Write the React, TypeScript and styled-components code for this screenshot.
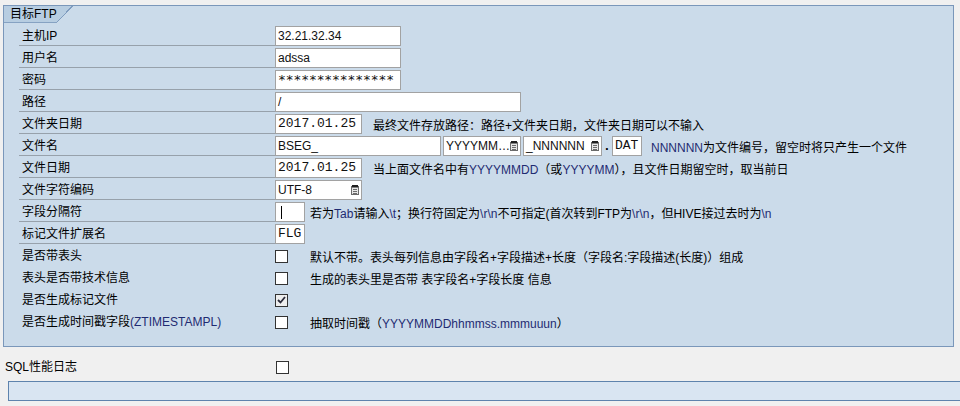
import React from 'react';
import styled, { createGlobalStyle } from 'styled-components';

const GlobalStyle = createGlobalStyle`
  *, *::before, *::after { box-sizing: border-box; }
  html, body {
    margin: 0;
    padding: 0;
    background: #f0f0f0;
  }
  body {
    width: 960px;
    height: 406px;
    overflow: hidden;
    font-family: "Liberation Sans", "Noto Sans CJK SC", sans-serif;
    font-size: 12px;
    color: #000;
  }
`;

const Page = styled.div`
  padding-top: 5px;
  overflow: hidden;
`;

const Group = styled.section`
  margin: 0 6px 0 3px;
  border: 1px solid #7a97ba;
  background: #cbdbea;
  padding-bottom: 14px;
`;

const GroupTitle = styled.div`
  position: relative;
  width: 53px;
  height: 17px;
  padding-left: 6px;
  line-height: 16px;
  white-space: nowrap;
  background: #b7cde1;
  border-bottom: 1px solid #86a2c2;

  &::after {
    content: '';
    position: absolute;
    left: 100%;
    top: 0;
    bottom: -1px;
    width: 16px;
    background: linear-gradient(
      to bottom right,
      #b7cde1 calc(50% - 1px),
      #7f9cbf calc(50% - 1px),
      #7f9cbf 50%,
      transparent 50%
    );
  }
`;

const Form = styled.div`
  display: flex;
  flex-direction: column;
  gap: 2px;
  margin-top: 3px;
  padding-left: 15px;
`;

const Row = styled.div`
  display: flex;
  height: 20px;
`;

const Label = styled.div<{ $ruled?: boolean; $width?: number }>`
  flex: none;
  width: ${p => p.$width ?? 256}px;
  padding-left: 3px;
  padding-bottom: 1px;
  display: flex;
  align-items: flex-end;
  line-height: 16px;
  white-space: nowrap;
  border-bottom: 1px solid ${p => (p.$ruled ? '#97a1ab' : 'transparent')};
`;

const Field = styled.div`
  display: flex;
  align-items: center;
  height: 20px;
  white-space: nowrap;
`;

const TextBox = styled.div<{ $width: number; $mono?: boolean }>`
  flex: none;
  width: ${p => p.$width}px;
  height: 20px;
  padding: 0 2px;
  display: flex;
  align-items: center;
  justify-content: space-between;
  overflow: hidden;
  background: #fff;
  border: 1px solid #a2a2a2;
  font-family: ${p =>
    p.$mono ? '"Liberation Mono", monospace' : '"Liberation Sans", "Noto Sans CJK SC", sans-serif'};
  font-size: ${p => (p.$mono ? 13 : 12)}px;
  line-height: 18px;
  color: #111;
  & + & {
    margin-left: 2px;
  }
`;

const Secret = styled.span`
  font-family: "DejaVu Sans Mono", monospace;
  font-size: 13px;
  letter-spacing: -0.1px;
`;

const Caret = styled.span`
  display: block;
  width: 1px;
  height: 13px;
  margin-left: 3px;
  background: #000;
`;

const Dot = styled.span`
  width: 10px;
  text-align: center;
  font-family: "Liberation Mono", monospace;
  font-size: 13px;
  font-weight: bold;
`;

const Desc = styled.span<{ $gap: number }>`
  margin-left: ${p => p.$gap}px;
  font-family: "Liberation Sans", "Noto Sans CJK SC", sans-serif;
  font-size: 12px;
`;

const Code = styled.span`
  color: #1f2b72;
`;

const Box = styled.span<{ $checked?: boolean }>`
  flex: none;
  width: 13px;
  height: 13px;
  display: inline-flex;
  align-items: center;
  justify-content: center;
  border: 1px solid #333;
  background: ${p => (p.$checked ? '#eeeeee' : '#fff')};
`;

const Outside = styled.div`
  display: flex;
  height: 20px;
  margin-top: 10px;
  padding-left: 2px;
`;

const Bar = styled.div`
  height: 20px;
  margin: 4px -20px 0 8px;
  border: 1px solid #5e83ad;
  background: #d9e5f2;
`;

const PickIcon = () => (
  <svg width="8" height="10" viewBox="0 0 8 10">
    <rect x="0.5" y="1.5" width="7" height="8" fill="#e6e6e6" stroke="#6a6a6a" />
    <rect x="1" y="0" width="6" height="2.5" fill="#1e1e1e" />
    <path d="M2 4.5h4M2 6.5h4M2 8.5h4" stroke="#6a6a6a" strokeWidth="1" />
  </svg>
);

const Check = ({ checked }: { checked?: boolean }) => (
  <Box $checked={checked}>
    {checked && (
      <svg width="9" height="8" viewBox="0 0 9 8">
        <path d="M1 4l2.5 2.5L8 1" fill="none" stroke="#2b2b3a" strokeWidth="1.8" />
      </svg>
    )}
  </Box>
);

export default function App() {
  return (
    <Page>
      <GlobalStyle />
      <Group>
        <GroupTitle>目标FTP</GroupTitle>
        <Form>
          <Row>
            <Label $ruled>主机IP</Label>
            <Field>
              <TextBox $width={126}>32.21.32.34</TextBox>
            </Field>
          </Row>
          <Row>
            <Label $ruled>用户名</Label>
            <Field>
              <TextBox $width={126}>adssa</TextBox>
            </Field>
          </Row>
          <Row>
            <Label $ruled>密码</Label>
            <Field>
              <TextBox $width={126}>
                <Secret>***************</Secret>
              </TextBox>
            </Field>
          </Row>
          <Row>
            <Label $ruled>路径</Label>
            <Field>
              <TextBox $width={246}>/</TextBox>
            </Field>
          </Row>
          <Row>
            <Label $ruled>文件夹日期</Label>
            <Field>
              <TextBox $width={87} $mono>2017.01.25</TextBox>
              <Desc $gap={11}>最终文件存放路径：路径+文件夹日期，文件夹日期可以不输入</Desc>
            </Field>
          </Row>
          <Row>
            <Label $ruled>文件名</Label>
            <Field>
              <TextBox $width={166}>BSEG_</TextBox>
              <TextBox $width={78}>
                YYYYMM…
                <PickIcon />
              </TextBox>
              <TextBox $width={79}>
                _NNNNNN
                <PickIcon />
              </TextBox>
              <Dot>.</Dot>
              <TextBox $width={30} $mono>DAT</TextBox>
              <Desc $gap={9}>
                <Code>NNNNNN</Code>为文件编号，留空时将只产生一个文件
              </Desc>
            </Field>
          </Row>
          <Row>
            <Label $ruled>文件日期</Label>
            <Field>
              <TextBox $width={87} $mono>2017.01.25</TextBox>
              <Desc $gap={11}>
                当上面文件名中有<Code>YYYYMMDD</Code>（或<Code>YYYYMM</Code>），且文件日期留空时，取当前日
              </Desc>
            </Field>
          </Row>
          <Row>
            <Label $ruled>文件字符编码</Label>
            <Field>
              <TextBox $width={87}>
                UTF-8
                <PickIcon />
              </TextBox>
            </Field>
          </Row>
          <Row>
            <Label $ruled>字段分隔符</Label>
            <Field>
              <TextBox $width={30}>
                <Caret />
              </TextBox>
              <Desc $gap={5}>
                若为<Code>Tab</Code>请输入<Code>\t</Code>；换行符固定为<Code>\r\n</Code>不可指定(首次转到FTP为
                <Code>\r\n</Code>，但HIVE接过去时为<Code>\n</Code>
              </Desc>
            </Field>
          </Row>
          <Row>
            <Label $ruled>标记文件扩展名</Label>
            <Field>
              <TextBox $width={30} $mono>FLG</TextBox>
            </Field>
          </Row>
          <Row>
            <Label>是否带表头</Label>
            <Field>
              <Check />
              <Desc $gap={22}>默认不带。表头每列信息由字段名+字段描述+长度（字段名:字段描述(长度)）组成</Desc>
            </Field>
          </Row>
          <Row>
            <Label>表头是否带技术信息</Label>
            <Field>
              <Check />
              <Desc $gap={22}>生成的表头里是否带 表字段名+字段长度 信息</Desc>
            </Field>
          </Row>
          <Row>
            <Label>是否生成标记文件</Label>
            <Field>
              <Check checked />
            </Field>
          </Row>
          <Row>
            <Label>
              是否生成时间戳字段<Code>(ZTIMESTAMPL)</Code>
            </Label>
            <Field>
              <Check />
              <Desc $gap={22}>
                抽取时间戳（<Code>YYYYMMDDhhmmss.mmmuuun</Code>）
              </Desc>
            </Field>
          </Row>
        </Form>
      </Group>
      <Outside>
        <Label $width={274}>SQL性能日志</Label>
        <Field>
          <Check />
        </Field>
      </Outside>
      <Bar />
    </Page>
  );
}
